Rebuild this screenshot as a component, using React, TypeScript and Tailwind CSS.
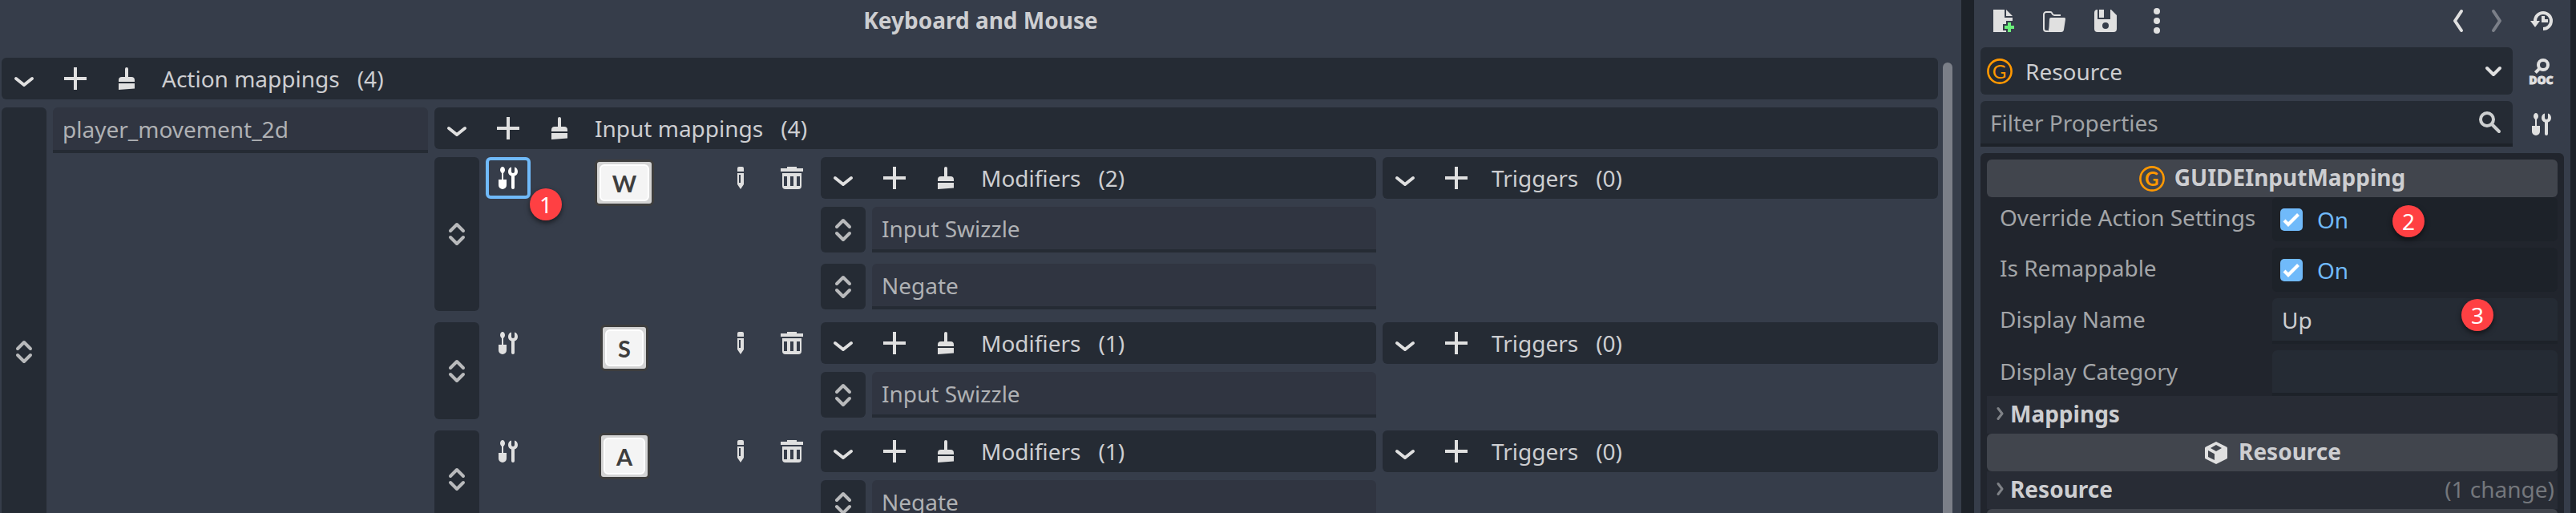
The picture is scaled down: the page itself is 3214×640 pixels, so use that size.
import { useState } from "react";
import type { ReactNode } from "react";

type IconProps = { className?: string };

function Icon({ className = "", children }: IconProps & { children: ReactNode }) {
  return (
    <svg viewBox="0 0 16 16" aria-hidden="true" className={`size-8 shrink-0 fill-[#e0e0e0] ${className}`}>
      {children}
    </svg>
  );
}

function Line({ d, width = 2 }: { d: string; width?: number }) {
  return (
    <path d={d} fill="none" stroke="currentColor" strokeWidth={width} strokeLinecap="round" strokeLinejoin="round" />
  );
}

const ChevronIcon = () => (
  <Icon className="text-[#e0e0e0]">
    <Line d="M3 8l5 4 5-4" />
  </Icon>
);

const DragIcon = () => (
  <Icon className="text-[#b9babc]">
    <Line d="M4 6l4-4 4 4M4 10l4 4 4-4" />
  </Icon>
);

const AddIcon = () => (
  <Icon>
    <path d="M7 1v6H1v2h6v6h2V9h6V7H9V1z" />
  </Icon>
);

const ClearIcon = () => (
  <Icon>
    <path d="M8 1a1 1 0 0 0-1 1v5H5a2 2 0 0 0-2 2v1h10V9a2 2 0 0 0-2-2H9V2a1 1 0 0 0-1-1zM3 11v4l10-.8V11z" />
  </Icon>
);

const ToolsIcon = ({ className }: IconProps) => (
  <Icon className={className}>
    <path d="M4.5 1C3.7 1 3 2 3 3c0 .9.5 1.6 1 2v4H2v3.5a2.5 2.5 0 0 0 5 0V9H5V5c.5-.4 1-1.1 1-2 0-1-.7-2-1.5-2z" />
    <path d="M10 1.2A3 3 0 0 0 8 4a3 3 0 0 0 2 2.8V14a1 1 0 0 0 2 0V6.8A3 3 0 0 0 14 4a3 3 0 0 0-2-2.8V4a1 1 0 0 1-2 0z" />
  </Icon>
);

const PencilIcon = () => (
  <Icon>
    <path fillRule="evenodd" d="M7 1a1 1 0 0 0-1 1v2h4V2a1 1 0 0 0-1-1zM6 5v7l2 3 2-3V5zm1 1h1v5H7z" />
  </Icon>
);

const TrashIcon = () => (
  <Icon>
    <path
      fillRule="evenodd"
      d="M5 1v1H1v2h14V2h-4V1zM2 5v8a2 2 0 0 0 2 2h8a2 2 0 0 0 2-2V5zm1 2h2v6H3zm4 0h2v6H7zm4 0h2v6h-2z"
    />
  </Icon>
);

const NewFileIcon = () => (
  <Icon>
    <path d="M2 1v14h8v-1H8v-4h2V8h4V6H9V1zM10 1v4h4z" />
    <path className="fill-[#6bf07a]" d="M11 9v2H9v2h2v2h2v-2h2v-2h-2V9z" />
  </Icon>
);

const FolderIcon = () => (
  <Icon className="text-[#e0e0e0]">
    <path
      d="M4 14.5H3A1.5 1.5 0 0 1 1.5 13V4A1.5 1.5 0 0 1 3 2.5h2.6C7 2.5 6.400 4.500 8 4.500h4"
      fill="none"
      stroke="currentColor"
    />
    <path d="M6 6h8.200a.8.8 0 0 1 .8.950l-1 6.500A1.800 1.800 0 0 1 12.300 15H3.500c1-.3 1.200-2.500 1.300-4L5 7a1 1 0 0 1 1-1z" />
  </Icon>
);

const SaveIcon = () => (
  <Icon>
    <path
      fillRule="evenodd"
      d="M3 1a2 2 0 0 0-2 2v10a2 2 0 0 0 2 2h10a2 2 0 0 0 2-2V4.500L11.500 1H11v6H3zM8 9a2 2 0 0 0 0 4 2 2 0 0 0 0-4z"
    />
    <path d="M4 1v5h3V1z" />
  </Icon>
);

const DotsIcon = () => (
  <Icon>
    <circle cx="8" cy="2" r="2" />
    <circle cx="8" cy="8" r="2" />
    <circle cx="8" cy="14" r="2" />
  </Icon>
);

const BackIcon = () => (
  <Icon className="text-[#e0e0e0]">
    <Line d="M10 2L6 8l4 6" />
  </Icon>
);

const ForwardIcon = () => (
  <Icon className="text-[#7b7f88]">
    <Line d="M6 2l4 6-4 6" />
  </Icon>
);

const HistoryIcon = () => (
  <Icon className="text-[#e0e0e0]">
    <path d="M4 8.500V8a5 5 0 1 1 5 5" fill="none" stroke="currentColor" strokeWidth="2" />
    <path d="M1 8h6l-3 4zM8 5v4h4V7h-2V5z" />
  </Icon>
);

const DocIcon = () => (
  <Icon className="overflow-visible text-[#e0e0e0]">
    <circle cx="9" cy="4" r="3" fill="none" stroke="currentColor" strokeWidth="2" />
    <path d="M7 6L4.200 8.800" stroke="currentColor" strokeWidth="2" />
    <text
      x="7.700"
      y="15.800"
      textAnchor="middle"
      stroke="currentColor"
      strokeWidth="0.400"
      className="font-['Noto_Sans',sans-serif] text-[7px] font-black"
    >
      DOC
    </text>
  </Icon>
);

const SearchIcon = () => (
  <Icon className="text-[#cdcfd0]">
    <circle cx="6" cy="6" r="4" fill="none" stroke="currentColor" strokeWidth="2" />
    <Line d="M9 9l4.500 4.500" />
  </Icon>
);

const GuideIcon = () => (
  <Icon>
    <circle cx="8" cy="8" r="7.300" fill="none" stroke="#ff9800" strokeWidth="1.300" />
    <text x="7.800" y="12.300" textAnchor="middle" className="fill-[#ff9800] font-[Lato,sans-serif] text-[12px]">
      G
    </text>
  </Icon>
);

const CubeIcon = () => (
  <Icon>
    <path
      fillRule="evenodd"
      d="M8 1l6.500 3.200q.5.300.5.800v6q0 .5-.5.800L8 15l-6.500-3.200Q1 11.500 1 11V5q0-.5.5-.8zM8 3L4.500 5 8 7l3.500-2zM3 6.500v4l4 2V8.600z"
    />
  </Icon>
);

const FoldIcon = () => (
  <svg viewBox="0 0 12 20" aria-hidden="true" className="h-5 w-3 shrink-0 text-[#7f8287]">
    <path d="M3 3.500l5 6.500-5 6.500" fill="none" stroke="currentColor" strokeWidth="3" strokeLinecap="round" strokeLinejoin="round" />
  </svg>
);

function IconButton({ label, focused, children }: { label: string; focused?: boolean; children: ReactNode }) {
  return (
    <button
      type="button"
      aria-label={label}
      className={`flex h-[52px] w-14 shrink-0 items-center justify-center rounded-md ${
        focused ? "border-4 border-[#70bafa]" : ""
      }`}
    >
      {children}
    </button>
  );
}

function DragHandle({ label, className = "" }: { label: string; className?: string }) {
  return (
    <button
      type="button"
      aria-label={label}
      className={`flex w-14 shrink-0 cursor-grab items-center justify-center rounded-md bg-[#252b34] ${className}`}
    >
      <DragIcon />
    </button>
  );
}

function SectionBar({ title, count, clearable = true }: { title: string; count: number; clearable?: boolean }) {
  return (
    <div className="flex h-[52px] items-center gap-2 rounded-md bg-[#252b34]">
      <IconButton label={`Collapse ${title}`}>
        <ChevronIcon />
      </IconButton>
      <IconButton label={`Add to ${title}`}>
        <AddIcon />
      </IconButton>
      {clearable && (
        <IconButton label={`Clear ${title}`}>
          <ClearIcon />
        </IconButton>
      )}
      <h3 className="ml-2">{title}</h3>
      <span className="ml-[14px]">({count})</span>
    </div>
  );
}

function Slot({ label, value, className = "" }: { label: string; value: string; className?: string }) {
  return (
    <input
      readOnly
      aria-label={label}
      value={value}
      className={`h-[57px] min-w-0 rounded-t-md border-b-4 border-[#252b34] bg-[#303541] px-3 text-[#afb1b4] outline-none ${className}`}
    />
  );
}

function Badge({ value, className }: { value: number; className: string }) {
  return (
    <span
      className={`absolute flex size-10 items-center justify-center rounded-full bg-[#ff4043] text-white shadow-[0_3px_6px_rgba(0,0,0,0.55)] ${className}`}
    >
      {value}
    </span>
  );
}

function KeyCap({ value }: { value: string }) {
  return (
    <kbd className="mt-[3px] flex h-[58px] rounded-md border-[3px] border-[#3e3e3e] bg-[#d4d4d4] p-[3px] font-[Lato,sans-serif] text-[29px] leading-none font-bold text-[#3e3e3e]">
      <span className="flex items-center rounded-md border-2 border-white bg-[#f4f4f4] px-[14px]">{value}</span>
    </kbd>
  );
}

type Mapping = { input: string; modifiers: string[]; selected?: boolean };

const mappings: Mapping[] = [
  { input: "W", modifiers: ["Input Swizzle", "Negate"], selected: true },
  { input: "S", modifiers: ["Input Swizzle"] },
  { input: "A", modifiers: ["Negate"] },
];

function MappingRow({ input, modifiers, selected }: Mapping) {
  return (
    <li className="flex gap-2">
      <DragHandle label={`Reorder ${input}`} />
      <div className="relative shrink-0 self-start">
        <IconButton label={`Edit settings of ${input}`} focused={selected}>
          <ToolsIcon className={selected ? "fill-white" : ""} />
        </IconButton>
        {selected && <Badge value={1} className="top-[39px] left-[55px]" />}
      </div>
      <div className="flex w-[218px] shrink-0 items-start justify-center">
        <KeyCap value={input} />
      </div>
      <IconButton label={`Edit ${input}`}>
        <PencilIcon />
      </IconButton>
      <IconButton label={`Delete ${input}`}>
        <TrashIcon />
      </IconButton>
      <div className="min-w-0 flex-1 pb-[2px]">
        <SectionBar title="Modifiers" count={modifiers.length} />
        <ul className="mt-[10px] flex flex-col gap-[14px]">
          {modifiers.map((modifier) => (
            <li key={modifier} className="flex gap-2">
              <DragHandle label={`Reorder ${modifier}`} />
              <Slot label={`Modifier of ${input}`} value={modifier} className="flex-1" />
            </li>
          ))}
        </ul>
      </div>
      <div className="min-w-0 flex-1">
        <SectionBar title="Triggers" count={0} clearable={false} />
      </div>
    </li>
  );
}

function MappingEditor() {
  return (
    <main className="flex min-w-0 flex-1 flex-col overflow-hidden bg-[#363d4a]">
      <h2 className="pt-[6px] pb-7 text-center font-bold">Keyboard and Mouse</h2>
      <div className="flex min-h-0 flex-1 gap-[6px] pr-[11px] pl-[2px]">
        <div className="min-w-0 flex-1">
          <SectionBar title="Action mappings" count={4} />
          <div className="mt-[10px] flex gap-2">
            <DragHandle label="Reorder player_movement_2d" />
            <Slot label="Action" value="player_movement_2d" className="w-[468px] shrink-0" />
            <div className="min-w-0 flex-1 pb-[86px]">
              <SectionBar title="Input mappings" count={4} />
              <ul className="mt-[10px] flex flex-col gap-[14px]">
                {mappings.map((mapping) => (
                  <MappingRow key={mapping.input} {...mapping} />
                ))}
              </ul>
            </div>
          </div>
        </div>
        <div className="mt-[6px] w-3 shrink-0 rounded-t-full bg-[#7b7f88]" />
      </div>
    </main>
  );
}

function PropertyRow({ id, label, children }: { id: string; label: string; children: ReactNode }) {
  return (
    <div className="flex">
      <label htmlFor={id} className="flex w-[356px] shrink-0 items-center pb-[6px] pl-4 text-[#a3a5a8]">
        {label}
      </label>
      <div className="relative min-w-0 flex-1">{children}</div>
    </div>
  );
}

function CheckProperty({ id, label, children }: { id: string; label: string; children?: ReactNode }) {
  const [on, setOn] = useState(true);
  return (
    <PropertyRow id={id} label={label}>
      <div className="flex h-[55px] items-center gap-[18px] rounded-md bg-[#1d2229] pl-[10px]">
        <span className="grid">
          <input
            id={id}
            type="checkbox"
            checked={on}
            onChange={(event) => setOn(event.target.checked)}
            className="col-start-1 row-start-1 size-7 appearance-none rounded-[5px] bg-[#3a404c] checked:bg-[#70bafa]"
          />
          {on && (
            <svg viewBox="0 0 28 28" aria-hidden="true" className="pointer-events-none col-start-1 row-start-1 size-7">
              <path d="M5 15l5 5L22.500 7.500" fill="none" stroke="#fff" strokeWidth="4.200" />
            </svg>
          )}
        </span>
        <span className="text-[#70bafa]">{on ? "On" : "Off"}</span>
      </div>
      {children}
    </PropertyRow>
  );
}

function TextProperty({ id, label, initial, children }: { id: string; label: string; initial: string; children?: ReactNode }) {
  const [value, setValue] = useState(initial);
  return (
    <PropertyRow id={id} label={label}>
      <input
        id={id}
        type="text"
        value={value}
        onChange={(event) => setValue(event.target.value)}
        className="block h-[57px] w-full rounded-t-md border-b-4 border-[#1d2229] bg-[#252b34] px-3 outline-none"
      />
      {children}
    </PropertyRow>
  );
}

function CategoryHeader({ icon, title }: { icon: ReactNode; title: string }) {
  return (
    <h3 className="flex h-[47px] items-center justify-center gap-3 rounded-md bg-[#41454d] font-bold">
      {icon}
      <span className="pb-1">{title}</span>
    </h3>
  );
}

function FoldedSection({ title, note }: { title: string; note?: string }) {
  return (
    <button type="button" className="flex h-[47px] w-full items-center gap-[6px] bg-[#282c35] pr-1 pb-1 pl-[11px] text-left">
      <FoldIcon />
      <span className="font-bold">{title}</span>
      {note && <span className="ml-auto text-[#74777c]">{note}</span>}
    </button>
  );
}

function Inspector() {
  return (
    <aside className="flex w-[744px] shrink-0 flex-col bg-[#363d4a] px-2">
      <div className="flex h-[51px] items-center gap-2">
        <IconButton label="New resource">
          <NewFileIcon />
        </IconButton>
        <IconButton label="Load resource">
          <FolderIcon />
        </IconButton>
        <IconButton label="Save resource">
          <SaveIcon />
        </IconButton>
        <IconButton label="More options">
          <DotsIcon />
        </IconButton>
        <button type="button" aria-label="Previous object" className="ml-auto flex w-10 justify-center">
          <BackIcon />
        </button>
        <button type="button" aria-label="Next object" className="flex w-10 justify-center">
          <ForwardIcon />
        </button>
        <IconButton label="History">
          <HistoryIcon />
        </IconButton>
      </div>

      <div className="mt-2 flex items-center gap-2">
        <div className="relative flex-1">
          <select
            aria-label="Edited object"
            defaultValue="Resource"
            className="block h-[59px] w-full appearance-none rounded-md bg-[#252b34] pr-14 pl-14 outline-none"
          >
            <option>Resource</option>
          </select>
          <span className="pointer-events-none absolute inset-y-0 left-2 flex items-center">
            <GuideIcon />
          </span>
          <span className="pointer-events-none absolute inset-y-0 right-2 flex items-center text-[#e0e0e0]">
            <Icon>
              <Line d="M4 6l4 4 4-4" />
            </Icon>
          </span>
        </div>
        <IconButton label="Open documentation">
          <DocIcon />
        </IconButton>
      </div>

      <div className="mt-2 flex items-center gap-2">
        <div className="relative flex-1">
          <input
            type="search"
            aria-label="Filter properties"
            placeholder="Filter Properties"
            className="block h-[57px] w-full rounded-t-md border-b-4 border-[#1d2229] bg-[#252b34] pr-14 pl-3 outline-none placeholder:text-[#a0a3a6]"
          />
          <span className="pointer-events-none absolute inset-y-0 right-3 flex items-center pb-1">
            <SearchIcon />
          </span>
        </div>
        <IconButton label="Manage object properties">
          <ToolsIcon />
        </IconButton>
      </div>

      <div className="mt-2 min-h-0 flex-1 overflow-hidden rounded-t-md bg-[#21252d] px-2 pt-2">
        <CategoryHeader icon={<GuideIcon />} title="GUIDEInputMapping" />
        <div className="flex flex-col gap-2">
          <CheckProperty id="override-action-settings" label="Override Action Settings">
            <Badge value={2} className="top-[10px] left-[150px]" />
          </CheckProperty>
          <CheckProperty id="is-remappable" label="Is Remappable" />
          <TextProperty id="display-name" label="Display Name" initial="Up">
            <Badge value={3} className="top-[1px] left-[236px]" />
          </TextProperty>
          <TextProperty id="display-category" label="Display Category" initial="" />
        </div>
        <FoldedSection title="Mappings" />
        <CategoryHeader icon={<CubeIcon />} title="Resource" />
        <FoldedSection title="Resource" note="(1 change)" />
        <div className="h-[47px] rounded-md bg-[#41454d]" />
      </div>
    </aside>
  );
}

export default function App() {
  return (
    <div className="flex h-screen gap-4 overflow-hidden bg-[#1d2229] pr-[7px] font-['Noto_Sans',sans-serif] text-[28px] leading-[38px] text-[#cdced1]">
      <MappingEditor />
      <Inspector />
    </div>
  );
}
